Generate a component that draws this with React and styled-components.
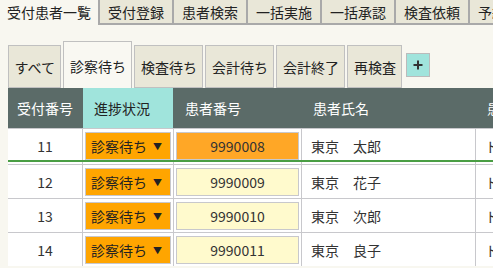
import React from "react";
import styled, { createGlobalStyle } from "styled-components";

const GlobalStyle = createGlobalStyle`
  body {
    margin: 0;
    background: #f8f7f0;
    font-family: "Noto Sans CJK JP", "Noto Sans", sans-serif;
    color: #333;
    overflow: hidden;
  }
`;

const Page = styled.div`
  width: 493px;
  height: 268px;
  overflow: hidden;
`;

const MainTabs = styled.div`
  display: flex;
  height: 25px;
  white-space: nowrap;
`;

const MainTab = styled.div`
  flex: none;
  box-sizing: border-box;
  height: 25px;
  display: flex;
  align-items: center;
  justify-content: center;
  font-size: 14px;
  color: #222;
  width: ${(p) => (p.$active ? "98px" : "74px")};
  background: ${(p) => (p.$active ? "transparent" : "#e9e7d8")};
  border-left: ${(p) => (p.$active ? "none" : "2px solid #a9a9a9")};
  border-bottom: ${(p) => (p.$active ? "none" : "2px solid #a9a9a9")};
  padding-bottom: ${(p) => (p.$active ? "1px" : "0")};
`;

const Content = styled.div`
  padding: 16px 0 0 8px;
`;

const SubTabs = styled.div`
  display: flex;
  align-items: flex-end;
  gap: 2px;
  height: 47px;
`;

const SubTab = styled.div`
  box-sizing: border-box;
  display: flex;
  align-items: center;
  padding: ${(p) => (p.$active ? "2px 5.5px 0" : "0 5.5px")};
  height: ${(p) => (p.$active ? "47px" : "43px")};
  border: 1px solid #c0c0c0;
  border-bottom: ${(p) => (p.$active ? "none" : "1px solid #c0c0c0")};
  background: ${(p) => (p.$active ? "#f9f8f2" : "#e9e7d8")};
  font-size: 14px;
  color: #222;
  white-space: nowrap;
`;

const AddTab = styled.div`
  box-sizing: border-box;
  align-self: flex-start;
  margin: 12px 0 0 2px;
  width: 24px;
  height: 24px;
  border: 1px solid #bbb;
  background: #a0e4dc;
  display: flex;
  align-items: center;
  justify-content: center;
`;

const columns = "74px 90px 127px 173px 220px";

const HeaderRow = styled.div`
  display: grid;
  grid-template-columns: ${columns};
  column-gap: 1px;
  height: 40px;
  background: #5b6b68;
  width: max-content;
`;

const HeaderCell = styled.div`
  display: flex;
  align-items: center;
  justify-content: ${(p) => (p.$center ? "center" : "flex-start")};
  padding-left: ${(p) => (p.$center ? "0" : "11px")};
  background: ${(p) => (p.$accent ? "#a0e4dc" : "#5b6b68")};
  color: ${(p) => (p.$accent ? "#222" : "#fff")};
  font-size: 14px;
  white-space: nowrap;
`;

const BodyRow = styled.div`
  position: relative;
  display: grid;
  grid-template-columns: ${columns};
  column-gap: 1px;
  width: max-content;
  background: #c8c8cc;
  border-top: 1px solid #c8c8cc;

  &::after {
    content: "";
    display: ${(p) => (p.$selected ? "block" : "none")};
    position: absolute;
    left: 0;
    right: 0;
    bottom: 2px;
    height: 2px;
    background: #4a9e44;
  }
`;

const Cell = styled.div`
  display: flex;
  align-items: center;
  justify-content: ${(p) => (p.$center ? "center" : "flex-start")};
  background: #fff;
  padding: ${(p) => (p.$selected ? "3px 2px 4px" : "3px 2px 2px")};
  padding-left: ${(p) => p.$indent || "2px"};
  font-size: 14px;
  color: #333;
  white-space: nowrap;
  overflow: hidden;
`;

const StatusSelect = styled.div`
  box-sizing: border-box;
  width: 100%;
  height: 28px;
  display: flex;
  align-items: center;
  gap: 6px;
  padding-left: 5px;
  background: #ffa500;
  border: 1px solid #c8c8cc;
  font-size: 14px;
  color: #222;
`;

const Arrow = styled.span`
  font-size: 9px;
  color: #222;
`;

const IdInput = styled.input`
  box-sizing: border-box;
  width: 100%;
  height: 28px;
  margin: 0;
  border: 1px solid #c8c8cc;
  background: ${(p) => (p.$selected ? "#ffa726" : "#fffacd")};
  text-align: center;
  font-family: "Noto Sans CJK JP", "Noto Sans", sans-serif;
  font-size: 14px;
  color: #333;
  outline: none;
`;

const mainTabs = ["受付登録", "患者検索", "一括実施", "一括承認", "検査依頼", "予約一覧"];
const subTabs = ["すべて", "診察待ち", "検査待ち", "会計待ち", "会計終了", "再検査"];

const patients = [
  { no: 11, id: "9990008", name: "東京　太郎", kana: "トウキョウ　タロウ" },
  { no: 12, id: "9990009", name: "東京　花子", kana: "トウキョウ　ハナコ" },
  { no: 13, id: "9990010", name: "東京　次郎", kana: "トウキョウ　ジロウ" },
  { no: 14, id: "9990011", name: "東京　良子", kana: "トウキョウ　ヨシコ" },
];

const PlusIcon = () => (
  <svg width="10" height="10" viewBox="0 0 10 10">
    <path d="M5 0.5V9.5M0.5 5H9.5" stroke="#333" strokeWidth="2" />
  </svg>
);

const App = () => {
  return (
    <Page>
      <GlobalStyle />
      <MainTabs>
        <MainTab $active>受付患者一覧</MainTab>
        {mainTabs.map((t) => (
          <MainTab key={t}>{t}</MainTab>
        ))}
      </MainTabs>

      <Content>
        <SubTabs>
          {subTabs.map((t) => (
            <SubTab key={t} $active={t === "診察待ち"}>
              {t}
            </SubTab>
          ))}
          <AddTab>
            <PlusIcon />
          </AddTab>
        </SubTabs>

        <HeaderRow>
          <HeaderCell $center>受付番号</HeaderCell>
          <HeaderCell $accent>進捗状況</HeaderCell>
          <HeaderCell>患者番号</HeaderCell>
          <HeaderCell>患者氏名</HeaderCell>
          <HeaderCell>患者氏名カナ</HeaderCell>
        </HeaderRow>

        {patients.map((p, i) => {
          const selected = i === 0;
          return (
            <BodyRow key={p.no} $selected={selected}>
              <Cell $center $selected={selected}>{p.no}</Cell>
              <Cell $selected={selected}>
                <StatusSelect>
                  診察待ち<Arrow>▼</Arrow>
                </StatusSelect>
              </Cell>
              <Cell $selected={selected}>
                <IdInput readOnly value={p.id} $selected={selected} />
              </Cell>
              <Cell $selected={selected} $indent="9px">{p.name}</Cell>
              <Cell $selected={selected} $indent="9px">{p.kana}</Cell>
            </BodyRow>
          );
        })}
      </Content>
    </Page>
  );
};

export default App;
